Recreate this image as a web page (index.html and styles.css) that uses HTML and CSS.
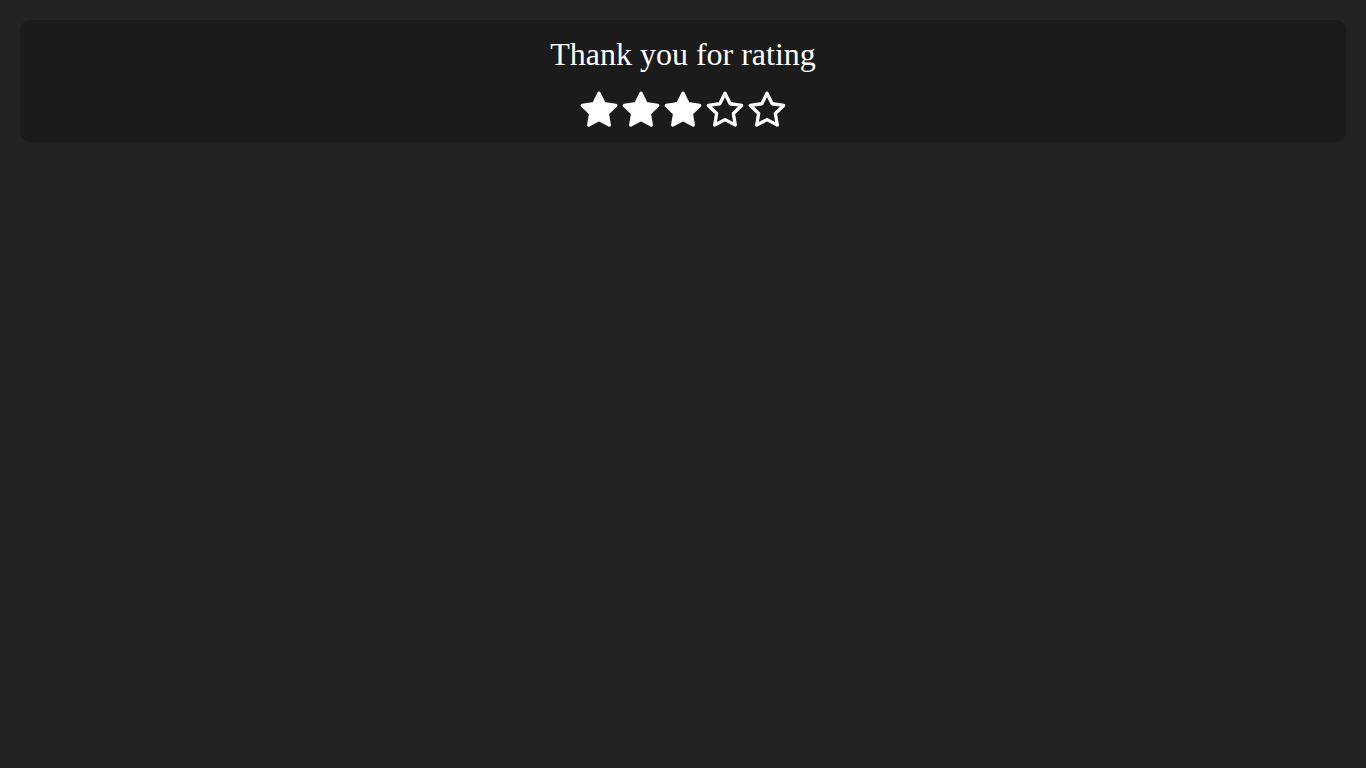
FILE: index.html
```html
<!DOCTYPE html>
<html lang="en">
<head>
<meta charset="utf-8">
<title>Rating</title>
<link rel="stylesheet" href="styles.css">
</head>
<body>
<div class="card">
  <h1 class="title">Thank you for rating</h1>
  <div class="stars">
    <svg class="star filled" viewBox="0 0 24 24"><path d="M12 2l3.09 6.26L22 9.27l-5 4.87 1.18 6.88L12 17.77l-6.18 3.25L7 14.14 2 9.27l6.91-1.01L12 2z"/></svg>
    <svg class="star filled" viewBox="0 0 24 24"><path d="M12 2l3.09 6.26L22 9.27l-5 4.87 1.18 6.88L12 17.77l-6.18 3.25L7 14.14 2 9.27l6.91-1.01L12 2z"/></svg>
    <svg class="star filled" viewBox="0 0 24 24"><path d="M12 2l3.09 6.26L22 9.27l-5 4.87 1.18 6.88L12 17.77l-6.18 3.25L7 14.14 2 9.27l6.91-1.01L12 2z"/></svg>
    <svg class="star" viewBox="0 0 24 24"><path d="M12 2l3.09 6.26L22 9.27l-5 4.87 1.18 6.88L12 17.77l-6.18 3.25L7 14.14 2 9.27l6.91-1.01L12 2z"/></svg>
    <svg class="star" viewBox="0 0 24 24"><path d="M12 2l3.09 6.26L22 9.27l-5 4.87 1.18 6.88L12 17.77l-6.18 3.25L7 14.14 2 9.27l6.91-1.01L12 2z"/></svg>
  </div>
</div>
</body>
</html>
```
FILE: styles.css
```css
html, body {
  margin: 0;
  height: 100%;
}
body {
  background: #222222;
  padding: 20px;
  box-sizing: border-box;
  font-family: "Liberation Serif", "Times New Roman", serif;
  color: #ffffff;
}
.card {
  background: #1b1b1b;
  border-radius: 10px;
  padding: 16px 0 12px;
  display: flex;
  flex-direction: column;
  align-items: center;
}
.title {
  margin: 0;
  font-size: 32px;
  font-weight: normal;
  line-height: 37px;
}
.stars {
  display: flex;
  gap: 2px;
  margin-top: 17px;
}
.star {
  display: block;
  width: 40px;
  height: 40px;
  fill: none;
  stroke: #ffffff;
  stroke-width: 2;
  stroke-linejoin: round;
}
.star.filled {
  fill: #ffffff;
}
```
